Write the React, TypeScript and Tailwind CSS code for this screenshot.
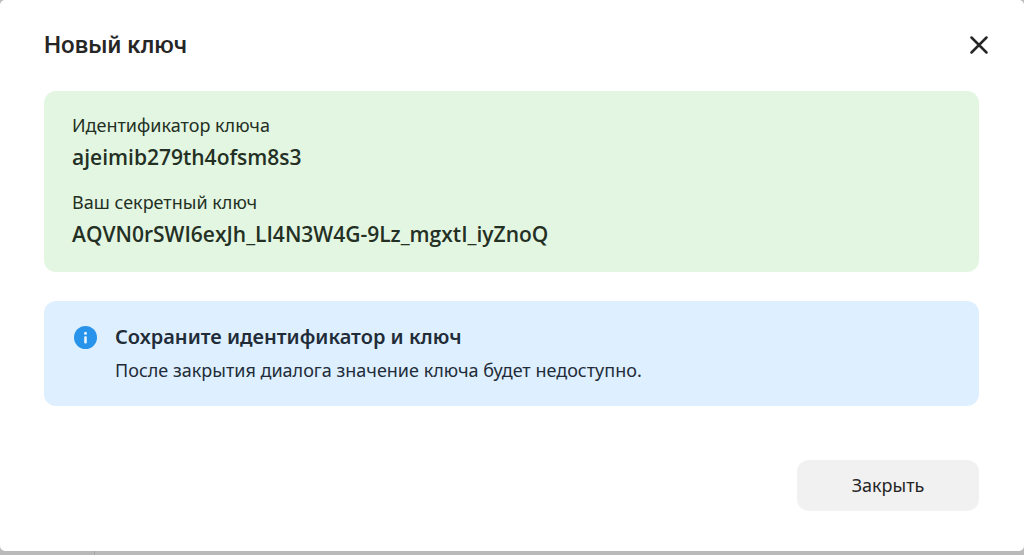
import React from "react";

type KeyField = { label: string; value: string };

const fields: KeyField[] = [
  { label: "Идентификатор ключа", value: "ajeimib279th4ofsm8s3" },
  { label: "Ваш секретный ключ", value: "AQVN0rSWI6exJh_LI4N3W4G-9Lz_mgxtI_iyZnoQ" },
];

function CloseIcon() {
  return (
    <svg className="size-[18px]" viewBox="0 0 18 18" fill="none" stroke="currentColor" strokeWidth="2.5" strokeLinecap="round" aria-hidden="true">
      <path d="M1.5 1.5 16.5 16.5M16.5 1.5 1.5 16.5" />
    </svg>
  );
}

function InfoIcon() {
  return (
    <svg className="size-[23px] shrink-0" viewBox="0 0 23 23" aria-hidden="true">
      <circle cx="11.5" cy="11.5" r="11.5" fill="#2893ea" />
      <circle cx="11.5" cy="7.2" r="1.5" fill="#e8f4ff" />
      <rect x="10.2" y="10.2" width="2.6" height="7.2" rx="0.8" fill="#e8f4ff" />
    </svg>
  );
}

export default function App() {
  return (
    <div className="flex min-h-screen flex-col bg-[#bababa] font-['Noto_Sans',sans-serif] text-[#262626]">
      <section role="dialog" aria-labelledby="dialog-title" className="rounded-[5px] bg-white pt-[29px] pr-[45px] pb-10 pl-11">
        <header className="-mr-5 flex h-8 items-center justify-between">
          <h1 id="dialog-title" className="font-['Roboto',sans-serif] text-2xl font-medium">Новый ключ</h1>
          <button type="button" aria-label="Закрыть окно" className="flex size-10 items-center justify-center">
            <CloseIcon />
          </button>
        </header>

        <dl className="mt-[30px] flex flex-col gap-[17px] rounded-xl bg-[#e3f6e2] px-7 py-[22px] text-[#243024]">
          {fields.map((field) => (
            <div key={field.label} className="flex flex-col gap-1">
              <dt className="text-lg leading-6">{field.label}</dt>
              <dd className="font-['Open_Sans',sans-serif] text-[21px] leading-8 font-semibold break-words">{field.value}</dd>
            </div>
          ))}
        </dl>

        <div className="mt-[29px] flex gap-[18px] rounded-xl bg-[#def0ff] px-[30px] pt-5 pb-6 text-[#222c38]">
          <div className="flex h-8 items-center">
            <InfoIcon />
          </div>
          <div className="flex flex-col gap-[5px]">
            <h2 className="text-xl leading-8 font-semibold">Сохраните идентификатор и ключ</h2>
            <p className="text-lg leading-6">После закрытия диалога значение ключа будет недоступно.</p>
          </div>
        </div>

        <footer className="mt-[54px] flex justify-end">
          <button type="button" className="h-[51px] w-[182px] rounded-xl bg-[#f1f1f1] pb-0.5 text-lg">
            Закрыть
          </button>
        </footer>
      </section>
      <div className="w-[95px] grow border-r border-[#a6a6a6]" />
    </div>
  );
}
